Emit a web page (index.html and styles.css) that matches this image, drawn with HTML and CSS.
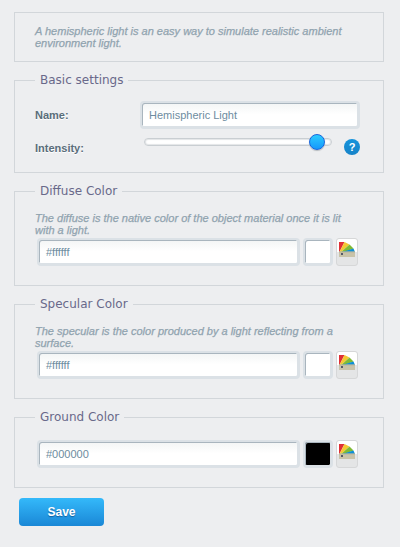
FILE: index.html
```html
<!DOCTYPE html>
<html lang="en">
<head>
<meta charset="utf-8">
<title>Hemispheric Light</title>
<link rel="stylesheet" href="styles.css">
</head>
<body>
<svg width="0" height="0" class="defs">
  <symbol id="swatches" viewBox="0 0 16 16">
    <path d="M0 0h5.5L0 11z" fill="#df3036"/>
    <path d="M5.5 0l5 2.5L1 11H0z" fill="#f3c832"/>
    <path d="M10.5 2.5L14.500 6.500 3 11H1z" fill="#7fba35"/>
    <path d="M14.500 6.500l1.500 3.500H3z" fill="#0c8fd5"/>
    <path d="M0 9.500h16v5.500H0z" fill="#c9c3a9"/>
    <path d="M0 9.500h16v1H0z" fill="#aaa993" opacity=".6"/>
    <path d="M2 11h2v2H2z" fill="#555968"/>
  </symbol>
</svg>
<form class="form">
  <section class="box intro"><p class="desc wide">A hemispheric light is an easy way to simulate realistic ambient<br>environment light.</p></section>
  <section class="box basic">
    <h2 class="legend">Basic settings</h2>
    <div class="row"><label class="label">Name:</label><div class="field name">Hemispheric Light</div></div>
    <div class="row intensity"><label class="label">Intensity:</label><div class="track"><span class="thumb"></span></div><span class="help">?</span></div>
  </section>
  <section class="box color">
    <h2 class="legend">Diffuse Color</h2>
    <p class="desc">The diffuse is the native color of the object material once it is lit<br>with a light.</p>
    <div class="picker"><div class="field hex">#ffffff</div><span class="field swatch"></span><span class="button"><svg class="icon"><use href="#swatches"/></svg></span></div>
  </section>
  <section class="box color">
    <h2 class="legend">Specular Color</h2>
    <p class="desc">The specular is the color produced by a light reflecting from a<br>surface.</p>
    <div class="picker"><div class="field hex">#ffffff</div><span class="field swatch"></span><span class="button"><svg class="icon"><use href="#swatches"/></svg></span></div>
  </section>
  <section class="box ground">
    <h2 class="legend">Ground Color</h2>
    <div class="picker"><div class="field hex">#000000</div><span class="field swatch black"></span><span class="button"><svg class="icon"><use href="#swatches"/></svg></span></div>
  </section>
  <button class="save" type="button">Save</button>
</form>
</body>
</html>
```
FILE: styles.css
```css
* { box-sizing: border-box; }
body {
  margin: 0;
  background: #edeef0;
  font: 11px "Liberation Sans", Arial, sans-serif;
  color: #6d8ca0;
}
.defs { display: block; }
.form {
  display: flex;
  flex-direction: column;
  align-items: flex-start;
  width: 384px;
  padding: 12px 0 0 14px;
}
.box {
  width: 370px;
  margin-bottom: 18px;
  padding: 0 20px;
  border: 1px solid #d2d6da;
}
.intro { height: 50px; padding-top: 12px; }
.basic { height: 93px; }
.color { height: 95px; }
.ground { height: 71px; margin-bottom: 10px; }
.legend {
  width: max-content;
  height: 18px;
  margin: -10px 0 0;
  padding: 0 5px;
  background: #edeef0;
  color: #69698a;
  font: 12px/18px "DejaVu Sans", Verdana, sans-serif;
}
.desc {
  margin: 0;
  color: #90a3af;
  font-style: italic;
  line-height: 12px;
  white-space: nowrap;
  -webkit-text-stroke: 0.25px #90a3af;
}
.color .desc { margin-top: 12px; }
.row { display: flex; align-items: center; height: 28px; margin-top: 12px; }
.label {
  width: 105px;
  color: #5a6d7a;
  font-weight: bold;
  text-shadow: 0 1px 0 #fff;
}
.field {
  height: 28px;
  padding: 0 6px;
  border: 2px solid #dbe1e6;
  border-bottom-width: 3px;
  border-right-width: 3px;
  border-radius: 4px;
  background: linear-gradient(#f3f5f5, #fff 50%);
  background-clip: padding-box;
  box-shadow: inset 1px 1px 0 #a9b5be;
  line-height: 24px;
}
.name { width: 220px; padding-left: 7px; }
.intensity { height: 20px; margin-top: 8px; }
.intensity .label { margin-top: 2px; }
.track {
  width: 188px;
  height: 8px;
  margin: -10px 12px 0 4px;
  border: 1px solid #c9ced2;
  border-radius: 4px;
  background: #fff;
  box-shadow: inset 0 0 1px 1px #e3e5e7;
}
.thumb {
  display: block;
  width: 16px;
  height: 16px;
  margin: -5px 0 0 164px;
  border: 1px solid #1765dc;
  border-radius: 50%;
  background: linear-gradient(#2ccbff, #1698fb);
  box-shadow: 0 1px 1px #b5b9bd;
}
.help {
  width: 16px;
  height: 16px;
  border-radius: 50%;
  background: linear-gradient(#1593dc, #1783c8);
  color: #fff;
  font-weight: bold;
  line-height: 16px;
  text-align: center;
}
.picker { display: flex; gap: 3px; margin: 2px 0 0 2px; }
.ground .picker { margin-top: 14px; }
.hex { width: 263px; padding-left: 7px; }
.swatch { width: 30px; background: #fff; background-clip: padding-box; }
.black { background: #000; background-clip: padding-box; }
.button {
  width: 22px;
  height: 28px;
  padding: 3px 2px 2px;
  border: 1px solid #d6d7d8;
  border-radius: 3px;
  background: linear-gradient(#fff 48%, #e4e5e6 52%);
}
.icon { display: block; width: 16px; height: 16px; }
.save {
  width: 85px;
  height: 28px;
  margin-left: 5px;
  padding: 0;
  border: 0;
  border-radius: 4px;
  background: linear-gradient(#34b9fa, #1a87d6);
  color: #fff;
  font: bold 12px "Liberation Sans", Arial, sans-serif;
  text-shadow: 0 1px 1px #1261a0;
}
```
